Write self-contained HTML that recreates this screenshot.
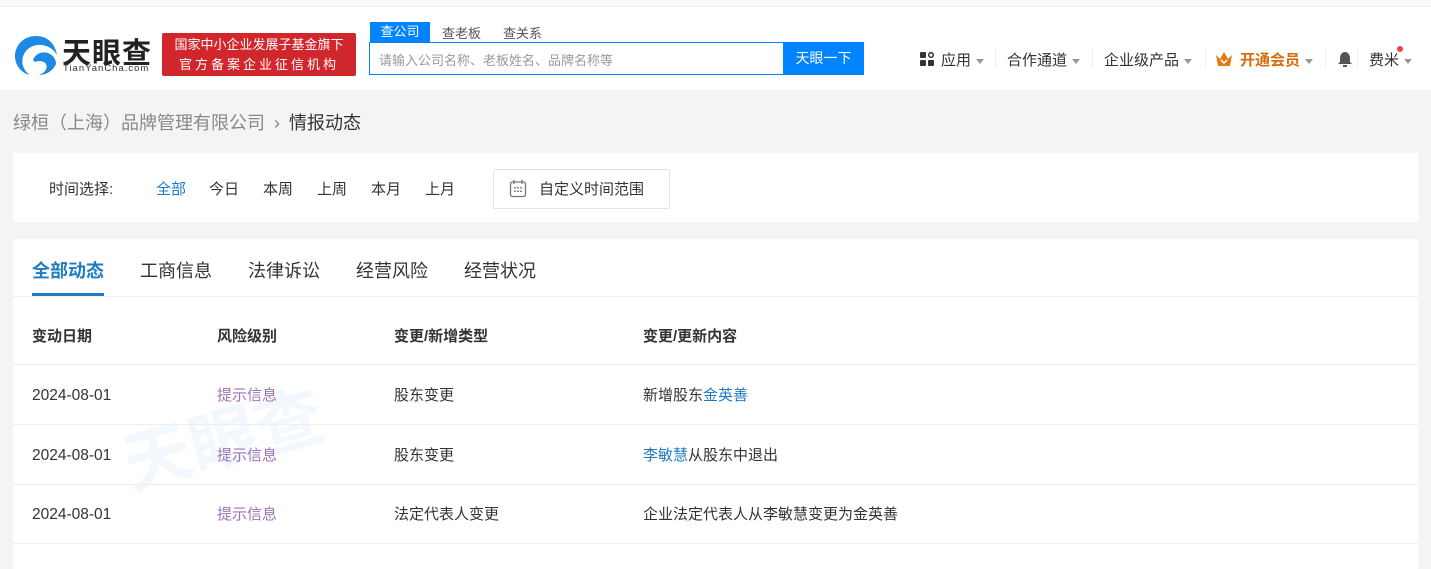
<!DOCTYPE html>
<html><head><meta charset="utf-8"><style>
*{margin:0;padding:0;box-sizing:border-box}
body{width:1431px;height:554px;overflow:hidden;background:#f4f4f5;font-family:"Liberation Sans","Noto Sans CJK SC",sans-serif;color:#333;position:relative}
.a{position:absolute;white-space:nowrap}
.hdr{position:absolute;left:0;top:6px;width:1431px;height:84px;background:#fff;border-top:1px solid #eee}
.card{position:absolute;background:#fff;border-radius:2px}
.nav{font-size:15px;color:#333;top:49px}
.caret{display:inline-block;border-left:4px solid transparent;border-right:4px solid transparent;border-top:5px solid #999;vertical-align:middle;margin-left:5px}
.sep{position:absolute;top:48px;width:1px;height:20px;background:#eee}
.row{position:absolute;left:13px;width:1405px;height:1px;background:#eee}
.t{font-size:15px;color:#333}
.d{font-size:15.5px;color:#333}
.p{color:#9c73b7}
.b{color:#1e7bc4}
</style></head><body>
<div class="a" style="left:0;top:0;width:1431px;height:6px;background:#fafafa"></div>
<div class="hdr"></div>
<svg class="a" style="left:13px;top:34px" width="46" height="42" viewBox="0 0 46 42">
<path d="M23 2C11 2 2 11 2 22c0 9 6 17 15 19 -6-4-9-11-7-18 2-8 10-13 19-12 7 1 12 5 15 10C42 9 34 2 23 2z" fill="#1e88e5"/>
<path d="M20 26c2-6 9-9 15-7 5 2 8 6 8 11-3 7-10 11-17 11 6-2 9-7 7-11-2-3-7-4-11-2z" fill="#1e88e5"/>
</svg>
<div class="a" style="left:62px;top:30px;font-size:29px;font-weight:bold;color:#222;letter-spacing:1px">天眼查</div>
<div class="a" style="left:63px;top:63px;font-size:9.5px;color:#333;letter-spacing:1px">TianYanCha.com</div>
<div class="a" style="left:162px;top:33px;width:194px;height:43px;background:#d2262d;border-radius:2px;color:#fff;font-size:13px;text-align:center;line-height:20px;padding-top:2px">国家中小企业发展子基金旗下<br><span style="letter-spacing:3px">官方备案企业征信机构</span></div>
<div class="a" style="left:370px;top:22px;width:60px;height:20px;background:#0084ff;color:#fff;font-size:13px;text-align:center;line-height:20px">查公司</div>
<div class="a" style="left:442px;top:23px;font-size:13px;color:#555">查老板</div>
<div class="a" style="left:503px;top:23px;font-size:13px;color:#555">查关系</div>
<div class="a" style="left:369px;top:42px;width:415px;height:33px;border:1px solid #0084ff;border-right:none;background:#fff"></div>
<div class="a" style="left:379px;top:50px;font-size:13px;color:#999">请输入公司名称、老板姓名、品牌名称等</div>
<div class="a" style="left:783px;top:42px;width:81px;height:33px;background:#0084ff;color:#fff;font-size:14px;text-align:center;line-height:33px">天眼一下</div>
<svg class="a" style="left:920px;top:52px" width="15" height="15" viewBox="0 0 15 15"><rect x="0" y="0" width="6" height="6" rx="1" fill="#333"/><rect x="0" y="8" width="6" height="6" rx="1" fill="#333"/><rect x="8" y="8" width="6" height="6" rx="1" fill="#333"/><circle cx="11" cy="3" r="2.3" fill="none" stroke="#333" stroke-width="1.5"/></svg>
<div class="a nav" style="left:941px">应用<span class="caret"></span></div>
<div class="sep" style="left:995px"></div>
<div class="a nav" style="left:1007px">合作通道<span class="caret"></span></div>
<div class="sep" style="left:1092px"></div>
<div class="a nav" style="left:1104px">企业级产品<span class="caret"></span></div>
<div class="sep" style="left:1205px"></div>
<svg class="a" style="left:1215px;top:51px" width="18" height="16" viewBox="0 0 18 16"><path d="M1 4l4 4 4-7 4 7 4-4-2 11H3z" fill="#e07a16"/><path d="M6 9l3 3 3-3" stroke="#fff" stroke-width="1.5" fill="none"/></svg>
<div class="a nav" style="left:1240px;color:#d86b0e;font-weight:bold">开通会员<span class="caret"></span></div>
<div class="sep" style="left:1325px"></div>
<svg class="a" style="left:1337px;top:51px" width="16" height="17" viewBox="0 0 16 17"><path d="M8 1c-3 0-5 3-5 6v4l-2 2h14l-2-2V7c0-3-2-6-5-6z" fill="#555"/><rect x="6" y="14" width="4" height="2" fill="#555"/></svg>
<div class="sep" style="left:1357px"></div>
<div class="a nav" style="left:1369px">费米<span class="caret"></span></div>
<div class="a" style="left:1397px;top:46px;width:6px;height:6px;border-radius:50%;background:#f04343"></div>
<div class="a" style="left:13px;top:109px;font-size:18px;color:#888">绿桓（上海）品牌管理有限公司 <span style="margin:0 4px">›</span> <span style="color:#333">情报动态</span></div>
<div class="card" style="left:13px;top:153px;width:1405px;height:69px"></div>
<div class="a t" style="left:49px;top:178px">时间选择:</div>
<div class="a t" style="left:156px;top:178px;color:#1e7bc4">全部</div>
<div class="a t" style="left:209px;top:178px">今日</div>
<div class="a t" style="left:263px;top:178px">本周</div>
<div class="a t" style="left:317px;top:178px">上周</div>
<div class="a t" style="left:371px;top:178px">本月</div>
<div class="a t" style="left:425px;top:178px">上月</div>
<div class="a" style="left:493px;top:169px;width:177px;height:40px;border:1px solid #e3e3e3;border-radius:2px"></div>
<svg class="a" style="left:509px;top:179px" width="18" height="19" viewBox="0 0 18 19"><rect x="1.5" y="3" width="15" height="14.5" rx="2" fill="none" stroke="#777" stroke-width="1.3"/><line x1="5" y1="1" x2="5" y2="5" stroke="#777" stroke-width="1.3"/><line x1="13" y1="1" x2="13" y2="5" stroke="#777" stroke-width="1.3"/><g fill="#888"><rect x="5" y="8" width="2" height="1.5"/><rect x="8" y="8" width="2" height="1.5"/><rect x="11" y="8" width="2" height="1.5"/><rect x="5" y="11.5" width="2" height="1.5"/><rect x="8" y="11.5" width="2" height="1.5"/><rect x="11" y="11.5" width="2" height="1.5"/></g></svg>
<div class="a t" style="left:539px;top:178px">自定义时间范围</div>
<div class="card" style="left:13px;top:239px;width:1405px;height:330px"></div>
<div class="a" style="left:32px;top:257px;font-size:18px;font-weight:bold;color:#1e7bc4">全部动态</div>
<div class="a" style="left:32px;top:293px;width:72px;height:3px;background:#1e7bc4"></div>
<div class="a" style="left:140px;top:257px;font-size:18px;color:#333">工商信息</div>
<div class="a" style="left:248px;top:257px;font-size:18px;color:#333">法律诉讼</div>
<div class="a" style="left:356px;top:257px;font-size:18px;color:#333">经营风险</div>
<div class="a" style="left:464px;top:257px;font-size:18px;color:#333">经营状况</div>
<div class="row" style="top:296px"></div>
<div class="a" style="left:120px;top:385px;font-size:68px;font-weight:bold;color:#1e88e5;opacity:0.05;transform:rotate(-15deg)">天眼查</div>
<div class="a t" style="left:32px;top:325px;font-weight:bold">变动日期</div>
<div class="a t" style="left:217px;top:325px;font-weight:bold">风险级别</div>
<div class="a t" style="left:394px;top:325px;font-weight:bold">变更/新增类型</div>
<div class="a t" style="left:643px;top:325px;font-weight:bold">变更/更新内容</div>
<div class="row" style="top:364px"></div>
<div class="a d" style="left:32px;top:387px">2024-08-01</div>
<div class="a t p" style="left:217px;top:384px">提示信息</div>
<div class="a t" style="left:394px;top:384px">股东变更</div>
<div class="a t" style="left:643px;top:384px">新增股东<span class="b">金英善</span></div>
<div class="row" style="top:424px"></div>
<div class="a d" style="left:32px;top:447px">2024-08-01</div>
<div class="a t p" style="left:217px;top:444px">提示信息</div>
<div class="a t" style="left:394px;top:444px">股东变更</div>
<div class="a t" style="left:643px;top:444px"><span class="b">李敏慧</span>从股东中退出</div>
<div class="row" style="top:484px"></div>
<div class="a d" style="left:32px;top:506px">2024-08-01</div>
<div class="a t p" style="left:217px;top:503px">提示信息</div>
<div class="a t" style="left:394px;top:503px">法定代表人变更</div>
<div class="a t" style="left:643px;top:503px">企业法定代表人从李敏慧变更为金英善</div>
<div class="row" style="top:543px"></div>
</body></html>
